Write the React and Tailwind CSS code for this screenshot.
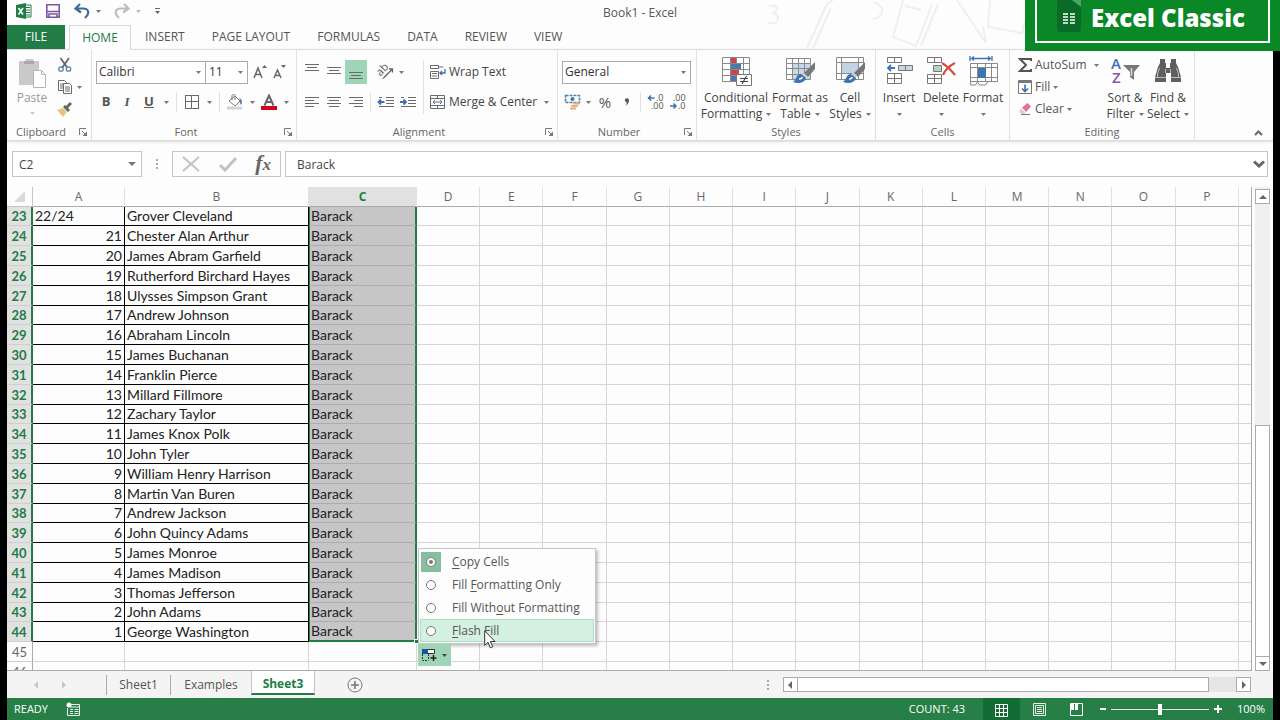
import React, { useState } from 'react';
import clsx from 'clsx';

const presidents = [
  ['22/24', 'Grover Cleveland'],
  ['21', 'Chester Alan Arthur'],
  ['20', 'James Abram Garfield'],
  ['19', 'Rutherford Birchard Hayes'],
  ['18', 'Ulysses Simpson Grant'],
  ['17', 'Andrew Johnson'],
  ['16', 'Abraham Lincoln'],
  ['15', 'James Buchanan'],
  ['14', 'Franklin Pierce'],
  ['13', 'Millard Fillmore'],
  ['12', 'Zachary Taylor'],
  ['11', 'James Knox Polk'],
  ['10', 'John Tyler'],
  ['9', 'William Henry Harrison'],
  ['8', 'Martin Van Buren'],
  ['7', 'Andrew Jackson'],
  ['6', 'John Quincy Adams'],
  ['5', 'James Monroe'],
  ['4', 'James Madison'],
  ['3', 'Thomas Jefferson'],
  ['2', 'John Adams'],
  ['1', 'George Washington'],
];

const emptyColumns = ['D', 'E', 'F', 'G', 'H', 'I', 'J', 'K', 'L', 'M', 'N', 'O', 'P'];

const tabs = ['HOME', 'INSERT', 'PAGE LAYOUT', 'FORMULAS', 'DATA', 'REVIEW', 'VIEW'];

const fillOptions = [
  { id: 'copy', label: <><u>C</u>opy Cells</> },
  { id: 'format', label: <>Fill <u>F</u>ormatting Only</> },
  { id: 'plain', label: <>Fill With<u>o</u>ut Formatting</> },
  { id: 'flash', label: <><u>F</u>lash Fill</> },
];

const Caret = ({ className = 'text-[#777]' }) => (
  <svg viewBox="0 0 5 3" className={clsx('h-[3px] w-[5px] shrink-0', className)} fill="currentColor">
    <path d="M0 0h5L2.5 3z" />
  </svg>
);

const IconButton = ({ label, className = 'w-[22px]', children }) => (
  <button aria-label={label} className={clsx('flex h-6 shrink-0 items-center justify-center', className)}>
    {children}
  </button>
);

const Launcher = ({ label }) => (
  <button aria-label={label} className="absolute right-[3px] bottom-[3px]">
    <svg viewBox="0 0 9 9" className="h-[9px] w-[9px]" fill="none" stroke="#777">
      <path d="M.5 7V.5H7M3 3l3.5 3.5" />
      <path d="M8 3.5V8H3.500z" fill="#777" stroke="none" />
    </svg>
  </button>
);

const Group = ({ name, launcher, className, children }) => (
  <section className={clsx('relative flex shrink-0 flex-col border-r border-[#e1e1e1] pt-1', className)}>
    <div className="flex flex-1">{children}</div>
    <h2 className="text-center text-[11px] leading-4 text-[#666]">{name}</h2>
    {launcher && <Launcher label={`${name} settings`} />}
  </section>
);

const Lines = ({ rows }) => (
  <svg viewBox="0 0 16 16" className="h-4 w-4" stroke="#6a6a6a" shapeRendering="crispEdges">
    {rows.map(([x1, x2, y]) => (
      <path key={y} d={`M${x1} ${y + 0.5}H${x2}`} />
    ))}
  </svg>
);

const IndentIcon = ({ right }) => (
  <svg viewBox="0 0 18 14" className="h-[14px] w-[18px]" fill="none">
    <path d="M2 2.500h3M9 2.500h8M9 5.500h8M9 8.500h8M2 11.500h15" stroke="#6a6a6a" />
    {right ? (
      <path d="M1 7h6M4.500 4.500 7 7l-2.500 2.500" stroke="#3f6fb0" strokeWidth="1.800" />
    ) : (
      <path d="M1.500 7h6M4 4.500 1.500 7 4 9.500" stroke="#3f6fb0" strokeWidth="1.800" />
    )}
  </svg>
);

const DecimalIcon = ({ increase }) => (
  <svg viewBox="0 0 18 16" className="h-4 w-[18px] overflow-visible" fontSize="9" fontFamily="Open Sans, sans-serif" fill="#555">
    <text x={increase ? 9 : 4} y="7">{increase ? '.0' : '.00'}</text>
    <text x={increase ? 4 : 9} y="15">{increase ? '.00' : '.0'}</text>
    {increase ? (
      <path d="M1.500 4h6M4 1.500 1.500 4 4 6.500" fill="none" stroke="#3f6fb0" strokeWidth="1.500" />
    ) : (
      <path d="M1 12h6M4.500 9.500 7 12l-2.500 2.500" fill="none" stroke="#3f6fb0" strokeWidth="1.500" />
    )}
  </svg>
);

const Brush = () => (
  <g>
    <path d="M31 8v7l-7 8-4-4z" fill="#777" />
    <path d="M19 18l4 4-1.500 2-4-4z" fill="#ccc" />
    <path d="M17 20c-5 0-4 5-8 8 5 2 12 1 13-4z" fill="#3f73b3" />
    <path d="M15 25c2 0 3-1 3-2" stroke="#fff" strokeWidth="1.500" />
  </g>
);

const ConditionalIcon = () => (
  <svg viewBox="0 0 32 32" className="h-8 w-8" fill="none">
    <path d="M2.500 3.500h27v24h-27zM2.500 9.500h27M2.500 15.500h27M2.500 21.500h27M10.500 3v25M16.500 3v25M23.500 3v25" stroke="#8a8a8a" />
    <path d="M11 4h5v5h-5zM11 16h8v5h-8z" fill="#cf4446" />
    <path d="M11 10h10v5H11zM11 22h5v5h-5z" fill="#4a78b0" />
    <path d="M16.500 20.500h15v11h-15z" fill="#fff" stroke="#777" />
    <path d="M20 24.500h8M20 27.500h8M26.500 22l-4.500 8" stroke="#444" strokeWidth="1.200" />
  </svg>
);

const FormatTableIcon = () => (
  <svg viewBox="0 0 32 32" className="h-8 w-8" fill="none">
    <path d="M9 10h18v15H9z" fill="#c9d8e8" />
    <path d="M2.500 4.500h24v21h-24zM2.500 9.500h24M2.500 14.500h24M2.500 20.500h24M8.500 4v21M14.500 4v21M20.500 4v21" stroke="#8a8a8a" />
    <Brush />
  </svg>
);

const CellStylesIcon = () => (
  <svg viewBox="0 0 32 32" className="h-8 w-8" fill="none">
    <path d="M2.500 3.500h27v22h-27zM2.500 8.500h27M2.500 19.500h27M7.500 3v22M24.500 3v22" stroke="#8a8a8a" />
    <path d="M8 9h16v10H8z" fill="#c2d3e5" />
    <Brush />
  </svg>
);

const InsertIcon = () => (
  <svg viewBox="0 0 32 32" className="h-8 w-8" fill="none">
    <path d="M4.500 3.500h14v5h-14zM11.500 3v6M4.500 19.500h14v10h-14zM4.500 24.500h14M11.500 19v11" stroke="#777" />
    <path d="M15.500 11.500h14v5h-14z" fill="#c9d8e8" stroke="#777" />
    <path d="M22.500 11v6" stroke="#777" />
    <path d="M5 14h7M8 11l-3 3 3 3" stroke="#3f73b3" strokeWidth="1.800" />
  </svg>
);

const DeleteIcon = () => (
  <svg viewBox="0 0 32 32" className="h-8 w-8" fill="none">
    <path d="M2.500 3.500h14v5h-14zM9.500 3v6M2.500 20.500h14v9h-14zM2.500 24.500h14M9.500 20v10" stroke="#777" />
    <path d="M8.500 11.500h8v6h-8z" fill="#b9d0c4" stroke="#777" />
    <path d="M17 9c5 3 9 7 13 12M30 9c-6 3-10 7-12 12" stroke="#d4503e" strokeWidth="2.200" />
  </svg>
);

const FormatIcon = () => (
  <svg viewBox="0 0 32 32" className="h-8 w-8" fill="none">
    <path d="M3 2v5M25 2v5M5 4.500h18M7 2.500l-2.500 2L7 6.500M21 2.500l2.500 2-2.500 2" stroke="#3f73b3" strokeWidth="1.300" />
    <path d="M3.500 9.500h27v18h-27zM3.500 13.500h27M3.500 23.500h27M10.500 9v19M18.500 9v19M24.500 9v19" stroke="#8a8a8a" />
    <path d="M11 14h8v10h-8z" fill="#3f73b3" />
    <path d="M3.500 27v4h5l2-3 2 3h6l3-4" stroke="#8a8a8a" />
  </svg>
);

const SortIcon = () => (
  <svg viewBox="0 0 32 32" className="h-8 w-8" fontFamily="Open Sans, sans-serif" fontSize="15" fontWeight="600">
    <text x="2" y="15" fill="#3f73b3">A</text>
    <text x="3" y="29" fill="#8455a8">Z</text>
    <path d="M14 11h17l-6 7v8l-4-3v-5z" fill="#787878" />
    <path d="M22.500 14v8" stroke="#ddd" strokeWidth="1.500" />
  </svg>
);

const FindIcon = () => (
  <svg viewBox="0 0 32 32" className="h-8 w-8" fill="#5f5f5f">
    <path d="M8 5h5v4h1v5h4V9h1V5h5v4l2 4 3 10v5H19v-9h-5v9H3v-5l3-10 2-4z" />
    <path d="M5.500 23v-3l2-6M26.500 23v-3l-2-6M13.500 15v4M18.500 15v4M3 23.500h11M19 23.500h10" stroke="#bbb" fill="none" />
  </svg>
);

const LargeButton = ({ icon, first, second, className }) => (
  <button className={clsx('flex shrink-0 flex-col items-center text-[12px] leading-4', className)}>
    <span className="mb-1">{icon}</span>
    <span className="whitespace-nowrap">{first}</span>
    <span className="flex h-4 items-center gap-1 whitespace-nowrap">
      {second}
      <Caret />
    </span>
  </button>
);

const TitleBar = () => (
  <header className="relative flex h-[25px] shrink-0 items-center pb-[3px]">
    <svg viewBox="0 0 264 49" className="absolute top-0 right-[248px] h-[49px] w-[264px]" fill="none" stroke="#efefef" strokeWidth="2">
      <path d="M8 6c10-2 10 6 3 7 9 1 8 12-3 10M46 48 66 4l6-4M52 48 70 8M112 2c12 4 12 14 0 17M225 43 196 0M216 30l9 13-3-16" />
      <path d="M142 0l-10 37 23 9 16-42M160 46 177 4M144 6l16 4M229 0l-2 27 34 6 3-12" />
    </svg>
    <h1 className="absolute inset-x-0 top-[5px] text-center text-[12px] leading-4 text-[#555]">Book1 - Excel</h1>
    <div className="relative flex items-center pl-2">
      <svg viewBox="0 0 18 18" className="mr-3 h-[18px] w-[18px]">
        <path d="M9 3h7v12H9z" fill="#fff" stroke="#217c46" />
        <path d="M11 5.500h4M11 8h4M11 10.500h4M11 13h4" stroke="#217c46" />
        <path d="M1 3l10-2v16L1 15z" fill="#217c46" />
        <path d="M3.500 6l4.500 6.500M8 6l-4.500 6.500" stroke="#fff" strokeWidth="1.600" />
      </svg>
      <IconButton label="Save" className="w-4">
        <svg viewBox="0 0 16 16" className="h-4 w-4" fill="none">
          <path d="M1.800 1.800h12.400v12.400H1.800z" stroke="#7f56a5" strokeWidth="1.600" />
          <path d="M2 8.500h12M4 14V11h8v3" stroke="#7f56a5" strokeWidth="1.600" />
        </svg>
      </IconButton>
      <IconButton label="Undo" className="ml-3 w-[18px]">
        <svg viewBox="0 0 18 16" className="h-4 w-[18px]" fill="none" stroke="#44699c" strokeWidth="2.200">
          <path d="M7 1 2.500 5.500 8 9.500M3 5.500h7c6 0 7 5 2 9.500" />
        </svg>
      </IconButton>
      <span className="ml-[5px]"><Caret /></span>
      <IconButton label="Redo" className="ml-3 w-[18px]">
        <svg viewBox="0 0 18 16" className="h-4 w-[18px]" fill="none" stroke="#bdbdbd" strokeWidth="2.200">
          <path d="M11 1l4.500 4.500L10 9.500M15 5.500H8c-6 0-7 5-2 9.500" />
        </svg>
      </IconButton>
      <span className="ml-[5px]"><Caret className="text-[#bbb]" /></span>
      <IconButton label="Customize toolbar" className="ml-3 w-2">
        <svg viewBox="0 0 7 7" className="h-[7px] w-[7px]" fill="#666">
          <path d="M1 0h5v1H1zM1 3h5L3.500 6z" />
        </svg>
      </IconButton>
    </div>
  </header>
);

const RibbonTabs = () => (
  <nav className="relative flex h-6 shrink-0 gap-px text-[12px] leading-6 text-[#555]">
    <button className="mr-[3px] w-[58px] bg-[#217c46] text-white">FILE</button>
    {tabs.map((tab) => (
      <button
        key={tab}
        className={clsx(
          'relative shrink-0',
          tab === 'HOME'
            ? 'z-10 -mb-px w-[62px] border border-b-0 border-[#d8d8d8] bg-[#fdfdfd] text-[#217c46]'
            : 'px-[13px]'
        )}
      >
        {tab}
      </button>
    ))}
  </nav>
);

const ClipboardGroup = () => (
  <Group name="Clipboard" launcher className="w-[85px] [&_h2]:pr-4">
    <button className="flex w-[50px] flex-col items-center pt-1 text-[12px] leading-4 text-[#999]">
      <svg viewBox="0 0 32 32" className="h-8 w-8 shrink-0">
        <path d="M3 3h6l1-2h7l1 2h5v24H3z" fill="#c9c9c9" />
        <path d="M8 3h10v3H8z" fill="#a9a9a9" />
        <path d="M17.500 12.500h8l4 4v13h-12z" fill="#fff" stroke="#b5b5b5" />
        <path d="M25.500 12.500v4h4" fill="none" stroke="#b5b5b5" />
      </svg>
      Paste
      <span className="mt-[6px]"><Caret className="text-[#ccc]" /></span>
    </button>
    <div className="flex flex-col">
      <div className="flex h-[22px] items-center">
        <IconButton label="Cut" className="w-4">
          <svg viewBox="0 0 16 16" className="h-4 w-4" fill="none">
            <path d="M3.500 1 10.500 11M12 1 5 11" stroke="#666" strokeWidth="1.800" />
            <circle cx="4" cy="12" r="2.200" stroke="#5c80b2" strokeWidth="1.300" />
            <circle cx="11.500" cy="12" r="2.200" stroke="#5c80b2" strokeWidth="1.300" />
          </svg>
        </IconButton>
      </div>
      <div className="flex h-[22px] items-center gap-1">
        <IconButton label="Copy" className="w-4">
          <svg viewBox="0 0 16 16" className="h-4 w-4" fill="#fff" stroke="#6a6a6a">
            <path d="M1.500 1.500h6l2 2v8h-8zM3 5h4M3 7h4M3 9h4" />
            <path d="M6.500 4.500h6l2 2v8h-8zM8 8h5M8 10h5M8 12h5" />
          </svg>
        </IconButton>
        <Caret />
      </div>
      <div className="flex h-[22px] items-center">
        <IconButton label="Format painter" className="w-4">
          <svg viewBox="0 0 16 16" className="h-4 w-4">
            <path d="M0 9l6-2 4 4-4 5z" fill="#e8c47c" />
            <path d="M6 6l5 5 2-2-2-2 4-4-2-2-4 4-1-1z" fill="#666" />
          </svg>
        </IconButton>
      </div>
    </div>
  </Group>
);

const FontGroup = () => (
  <Group name="Font" launcher className="w-[205px] [&_h2]:pr-4">
    <div className="flex flex-col gap-[6px] pt-[6px] pl-1">
      <div className="flex h-6">
        <span className="relative flex items-center">
          <select aria-label="Font family" className="h-[23px] w-[110px] appearance-none border border-[#ababab] bg-white pl-[2px] text-[12px] text-[#333]">
            <option>Calibri</option>
          </select>
          <span className="pointer-events-none absolute right-[5px]"><Caret /></span>
        </span>
        <span className="relative -ml-px flex items-center">
          <select aria-label="Font size" className="h-[23px] w-[43px] appearance-none border border-[#ababab] bg-white pl-[3px] text-[12px] text-[#333]">
            <option>11</option>
          </select>
          <span className="pointer-events-none absolute right-[5px]"><Caret /></span>
        </span>
        <IconButton label="Grow font" className="ml-1">
          <svg viewBox="0 0 16 16" className="h-4 w-4" fill="none" stroke="#666" strokeWidth="1.500">
            <path d="M2 14 6 4l4 10M3.500 10.500h5" />
            <path d="M10 4l2.500-3L15 4z" fill="#666" stroke="none" />
          </svg>
        </IconButton>
        <IconButton label="Shrink font">
          <svg viewBox="0 0 16 16" className="h-4 w-4" fill="none" stroke="#666" strokeWidth="1.500">
            <path d="M3 14 6.500 6l3.500 8M4 11.500h5" />
            <path d="M10 1h5l-2.500 3z" fill="#666" stroke="none" />
          </svg>
        </IconButton>
      </div>
      <div className="flex h-6 items-center text-[13px] text-[#555]">
        <IconButton label="Bold" className="w-[20px]"><b>B</b></IconButton>
        <IconButton label="Italic"><i className="font-['Liberation_Serif'] font-bold">I</i></IconButton>
        <IconButton label="Underline"><b className="underline">U</b></IconButton>
        <IconButton label="Underline style" className="w-3"><Caret /></IconButton>
        <span className="mx-1 h-5 border-l border-[#e1e1e1]" />
        <IconButton label="Borders">
          <svg viewBox="0 0 14 14" className="h-[14px] w-[14px]" fill="none" stroke="#6a6a6a" shapeRendering="crispEdges">
            <path d="M.5.5h13v13H.5zM.5 6.500h13M6.500.5v13" />
          </svg>
        </IconButton>
        <IconButton label="Border style" className="w-3"><Caret /></IconButton>
        <span className="mx-1 h-5 border-l border-[#e1e1e1]" />
        <IconButton label="Fill color">
          <svg viewBox="0 0 18 16" className="h-4 w-[18px]">
            <path d="M3 7l6-5 5 5-5 5z" fill="#fff" stroke="#777" />
            <path d="M6 6V2c0-2 3-2 3 0v4" fill="none" stroke="#777" />
            <path d="M13 4c3 1 4 4 2 7-1-2-2-3-1-5z" fill="#5c80b2" />
            <path d="M1 12.500h15v3H1z" fill="#d3d3d3" />
          </svg>
        </IconButton>
        <IconButton label="Fill colors" className="w-3"><Caret /></IconButton>
        <IconButton label="Font color">
          <svg viewBox="0 0 16 16" className="h-4 w-4">
            <path d="M3.500 11.500 8 1.500l4.500 10M5 8h6" fill="none" stroke="#666" strokeWidth="2" />
            <path d="M0 12h16v4H0z" fill="#d5001c" />
          </svg>
        </IconButton>
        <IconButton label="Font colors" className="w-3"><Caret /></IconButton>
      </div>
    </div>
  </Group>
);

const AlignmentGroup = () => (
  <Group name="Alignment" launcher className="w-[261px] [&_h2]:pr-4">
    <div className="flex flex-col gap-[6px] pt-[6px] pl-1">
      <div className="flex h-6">
        <IconButton label="Top align"><Lines rows={[[1, 15, 0], [3, 13, 3], [1, 15, 6]]} /></IconButton>
        <IconButton label="Middle align"><Lines rows={[[1, 15, 3], [3, 13, 6], [1, 15, 9]]} /></IconButton>
        <IconButton label="Bottom align" className="w-[22px] bg-[#9fd5b7]"><Lines rows={[[1, 15, 8], [3, 13, 11], [1, 15, 14]]} /></IconButton>
        <IconButton label="Orientation" className="ml-2 w-[22px]">
          <svg viewBox="0 0 16 16" className="h-4 w-4 overflow-visible" fill="none" stroke="#666">
            <text x="-1" y="9" transform="rotate(-45 5 7)" fontSize="11" fontFamily="Open Sans, sans-serif" fill="#555" stroke="none">ab</text>
            <path d="M5 14.500 14.500 5M11 5h3.500v3.500" strokeWidth="1.300" />
          </svg>
        </IconButton>
        <IconButton label="Orientation options" className="w-2"><Caret /></IconButton>
      </div>
      <div className="flex h-6 items-center">
        <IconButton label="Align left"><Lines rows={[[1, 15, 3], [1, 10, 6], [1, 15, 9], [1, 10, 12]]} /></IconButton>
        <IconButton label="Center"><Lines rows={[[1, 15, 3], [3, 13, 6], [1, 15, 9], [3, 13, 12]]} /></IconButton>
        <IconButton label="Align right"><Lines rows={[[1, 15, 3], [6, 15, 6], [1, 15, 9], [6, 15, 12]]} /></IconButton>
        <span className="mr-1 ml-[3px] h-5 border-l border-[#e1e1e1]" />
        <IconButton label="Decrease indent"><IndentIcon /></IconButton>
        <IconButton label="Increase indent"><IndentIcon right /></IconButton>
      </div>
    </div>
    <div className="mt-[6px] ml-1 flex h-[54px] flex-col gap-[6px] border-l border-[#e1e1e1] pl-[6px] text-[12px] text-[#444]">
      <button className="flex h-6 items-center gap-[3px]">
        <svg viewBox="0 0 16 16" className="h-4 w-4" fill="none" stroke="#6a6a6a">
          <path d="M.5 1.500h8v3h-8zM8.500 3h5M.5 7.500h8v7h-8zM2 9.500h5M2 12h5" />
          <path d="M15 5v4h-5M12 7l-2 2 2 2" stroke="#3f6fb0" strokeWidth="1.300" />
        </svg>
        Wrap Text
      </button>
      <button className="flex h-6 items-center gap-[3px] whitespace-nowrap">
        <svg viewBox="0 0 16 16" className="h-4 w-4" fill="none" stroke="#6a6a6a">
          <path d="M.5 1.500h14v13H.5zM.5 4.500h14M.5 11.500h14M7.500 1.500v3M7.500 11.500v3" />
          <path d="M3 8h9M5 6 3 8l2 2M10 6l2 2-2 2" stroke="#55789f" />
        </svg>
        Merge &amp; Center
        <span className="ml-1"><Caret /></span>
      </button>
    </div>
  </Group>
);

const NumberGroup = () => (
  <Group name="Number" launcher className="w-[139px] [&_h2]:pr-4">
    <div className="flex flex-col gap-[6px] pt-[6px] pl-1">
      <span className="relative flex h-6 items-center">
        <select aria-label="Number format" className="h-[23px] w-[129px] appearance-none border border-[#ababab] bg-white pl-[2px] text-[12px] text-[#333]">
          <option>General</option>
        </select>
        <span className="pointer-events-none absolute right-[5px]"><Caret /></span>
      </span>
      <div className="flex h-6 items-center text-[#555]">
        <IconButton label="Accounting format">
          <svg viewBox="0 0 18 16" className="h-4 w-[18px]" fill="none">
            <path d="M1.500 1.500h14v7h-14z" stroke="#4f7fae" strokeWidth="1.600" strokeDasharray="3 1" />
            <circle cx="8.500" cy="5" r="2" fill="#3f6fb0" />
            <path d="M9 9.500h7M7 12h7M6 14.500h6" stroke="#e7b07c" strokeWidth="1.800" />
          </svg>
        </IconButton>
        <IconButton label="Accounting options" className="w-2"><Caret /></IconButton>
        <IconButton label="Percent style" className="w-[26px] text-[15px]">%</IconButton>
        <IconButton label="Comma style" className="w-[18px]">
          <svg viewBox="0 0 6 8" className="h-2 w-[6px]" fill="#555">
            <path d="M1 1.500C2-.5 5 0 5 2.500 5 5 3 7 1.500 8c1-1.500 1.500-3 1-4C1.500 4 .5 3 1 1.500z" />
          </svg>
        </IconButton>
        <span className="mx-1 h-5 border-l border-[#e1e1e1]" />
        <IconButton label="Increase decimal"><DecimalIcon increase /></IconButton>
        <IconButton label="Decrease decimal"><DecimalIcon /></IconButton>
      </div>
    </div>
  </Group>
);

const EditingGroup = () => (
  <Group name="Editing" className="w-[185px]">
    <div className="flex w-[92px] shrink-0 flex-col pl-2 text-[12px] text-[#555]">
      <button className="flex h-[22px] items-center gap-[3px]">
        <svg viewBox="0 0 14 14" className="h-[14px] w-[14px] shrink-0" fill="none" stroke="#555" strokeWidth="2">
          <path d="M13 3V1H2l6 6-6 6h11v-2" />
        </svg>
        AutoSum
        <span className="ml-1"><Caret /></span>
      </button>
      <button className="flex h-[22px] items-center gap-[3px]">
        <svg viewBox="0 0 14 14" className="h-[14px] w-[14px] shrink-0" fill="none">
          <path d="M.5.5h13v13H.5z" stroke="#777" />
          <path d="M1 1h12v2H1z" fill="#777" />
          <path d="M7 4.500v7M4 8.500l3 3 3-3" stroke="#3f6fb0" strokeWidth="1.600" />
        </svg>
        Fill
        <Caret />
      </button>
      <button className="flex h-[22px] items-center gap-[3px]">
        <svg viewBox="0 0 14 14" className="h-[14px] w-[14px] shrink-0">
          <path d="M4 5.500 9.500 1 13 4.500 8 10z" fill="#dd7590" />
          <path d="M3 6.500 7.500 11 5 12.500 1 10z" fill="#eec0cb" />
          <path d="M3 12.500h9" stroke="#777" />
        </svg>
        Clear
        <Caret />
      </button>
    </div>
    <LargeButton className="w-[46px]" icon={<SortIcon />} first="Sort &amp;" second="Filter" />
    <LargeButton className="w-[40px]" icon={<FindIcon />} first="Find &amp;" second="Select" />
  </Group>
);

const Ribbon = () => (
  <div className="relative flex h-[92px] shrink-0 border-t border-b border-[#dcdcdc] text-[#444] shadow-sm">
    <ClipboardGroup />
    <FontGroup />
    <AlignmentGroup />
    <NumberGroup />
    <Group name="Styles" className="w-[179px]">
      <LargeButton className="w-[78px]" icon={<ConditionalIcon />} first="Conditional" second="Formatting" />
      <LargeButton className="w-[50px]" icon={<FormatTableIcon />} first="Format as" second="Table" />
      <LargeButton className="w-[50px]" icon={<CellStylesIcon />} first="Cell" second="Styles" />
    </Group>
    <Group name="Cells" className="w-[134px]">
      <LargeButton className="ml-[2px] w-[42px]" icon={<InsertIcon />} first="Insert" />
      <LargeButton className="w-[42px]" icon={<DeleteIcon />} first="Delete" />
      <LargeButton className="w-[42px]" icon={<FormatIcon />} first="Format" />
    </Group>
    <EditingGroup />
    <button aria-label="Collapse ribbon" className="mt-auto mr-[10px] mb-1 ml-auto">
      <svg viewBox="0 0 9 6" className="h-[6px] w-[9px]" fill="none" stroke="#666" strokeWidth="2">
        <path d="M1 5l3.500-3.500L8 5" />
      </svg>
    </button>
  </div>
);

const Dots = () => (
  <svg viewBox="0 0 2 10" className="h-[10px] w-[2px] shrink-0" fill="#aaa">
    <path d="M0 0h2v2H0zM0 4h2v2H0zM0 8h2v2H0z" />
  </svg>
);

const FormulaBar = () => (
  <div className="flex h-[46px] shrink-0 items-center px-[5px] text-[12px] text-[#444]">
    <span className="relative flex items-center">
      <input aria-label="Name box" defaultValue="C2" className="h-[26px] w-[130px] border border-[#c6c6c6] bg-white px-[6px]" />
      <svg viewBox="0 0 8 4" className="absolute right-[6px] h-1 w-2" fill="#777">
        <path d="M0 0h8L4 4z" />
      </svg>
    </span>
    <span className="mx-[14px]"><Dots /></span>
    <div className="mr-1 flex h-[26px] w-[109px] items-center justify-between border border-[#c6c6c6] px-[9px]">
      <button aria-label="Cancel">
        <svg viewBox="0 0 18 16" className="h-4 w-[18px]" fill="none" stroke="#c2c2c2" strokeWidth="2">
          <path d="M1 1l16 14M17 1 1 15" />
        </svg>
      </button>
      <button aria-label="Enter">
        <svg viewBox="0 0 18 16" className="h-4 w-[18px]" fill="none" stroke="#c2c2c2" strokeWidth="3">
          <path d="M1 9l5 5L17 2" />
        </svg>
      </button>
      <button aria-label="Insert function" className="font-['Liberation_Serif'] text-[22px] leading-5 font-bold text-[#666] italic">
        f<span className="text-[17px]">x</span>
      </button>
    </div>
    <span className="relative flex flex-1 items-center">
      <input aria-label="Formula" defaultValue="Barack" className="h-[26px] w-full border border-[#c6c6c6] bg-white px-[11px]" />
      <svg viewBox="0 0 12 8" className="absolute right-[3px] h-2 w-3" fill="none" stroke="#666" strokeWidth="3">
        <path d="M1 1.500l5 4.500 5-4.500" />
      </svg>
    </span>
  </div>
);

const emptyCell = 'border-r border-b border-[#d6d6d6]';

const SheetRow = ({ number, data }) => (
  // the average row is a fifth of a pixel short of 20
  <tr className={number % 5 === 3 ? 'h-[19px]' : 'h-5'}>
    <th
      scope="row"
      className={clsx(
        'overflow-hidden border-b border-[#cfcfcf] text-center text-[13px]',
        data
          ? 'border-r-2 border-r-[#217c46] bg-[#e1e1e1] font-bold text-[#217c46]'
          : 'border-r border-r-[#ababab] font-normal text-[#666]'
      )}
    >
      {number}
    </th>
    {data ? (
      <>
        <td className={clsx('border-r border-b border-black px-[2px]', data[0].includes('/') ? 'text-left' : 'text-right')}>
          {data[0]}
        </td>
        <td className="border-r border-b border-black pl-[2px]">{data[1]}</td>
        <td
          className={clsx(
            'relative border-r-2 border-b border-l border-[#217c46] bg-[#c6c6c6] pl-px',
            number === 44 ? 'border-b-2' : 'border-b-[#adadad]'
          )}
        >
          Barack
          {number === 44 && <span className="absolute -right-1 -bottom-1 h-[5px] w-[5px] border border-white bg-[#217c46]" />}
        </td>
      </>
    ) : (
      <>
        <td className={emptyCell} />
        <td className={emptyCell} />
        <td className={emptyCell} />
      </>
    )}
    {emptyColumns.map((column) => (
      <td key={column} className={emptyCell} />
    ))}
    <td className="border-b border-[#d6d6d6]" />
  </tr>
);

const FillMenu = () => {
  const [selected, setSelected] = useState('copy');

  return (
    <div className="absolute top-[361px] left-[411px]">
      <fieldset className="w-[178px] border border-[#c6c6c6] bg-[#fdfdfd] p-px text-[12px] text-[#555] shadow-[2px_2px_3px_rgba(0,0,0,0.25)]">
        {fillOptions.map(({ id, label }) => (
          <label
            key={id}
            className={clsx(
              'flex h-[23px] items-center border',
              id === 'flash' ? 'border-[#b0ddc5] bg-[#d3f0e0]' : 'border-transparent'
            )}
          >
            <span className={clsx('mr-[11px] flex h-5 w-5 items-center justify-center', selected === id && 'bg-[#86bf9f]')}>
              <input
                type="radio"
                name="fill"
                checked={selected === id}
                onChange={() => setSelected(id)}
                className="h-[10px] w-[10px] appearance-none rounded-full border border-[#777] bg-white checked:h-2 checked:w-2 checked:border-2 checked:border-white checked:bg-[#777] checked:outline checked:outline-[#888]"
              />
            </span>
            <span className="underline-offset-2">{label}</span>
          </label>
        ))}
      </fieldset>
      <button aria-label="Auto fill options" className="flex h-[22px] w-[33px] items-center justify-between bg-[#9fd5b7] px-1">
        <svg viewBox="0 0 16 16" className="h-4 w-4" fill="none">
          <path d="M.5 2.500h12v4H.5z" fill="#fff" stroke="#333" />
          <path d="M0 2h6v5H0z" fill="#23509a" />
          <path d="M.5 7v6.500h6M6.500 7v6" stroke="#333" strokeDasharray="2 1" />
          <path d="M11.500 8v6M8.500 11h6" stroke="#222" strokeWidth="1.500" />
        </svg>
        <Caret className="text-[#444]" />
      </button>
      <svg viewBox="0 0 12 19" className="absolute top-[82px] left-[66px] h-[19px] w-3">
        <path d="M.7.8v14.500l3.300-3 2.300 5.500 2.400-1-2.300-5.300h4.600z" fill="#fff" stroke="#333" />
      </svg>
    </div>
  );
};

const ScrollButton = ({ label, path, className }) => (
  <button aria-label={label} className={clsx('flex h-[15px] w-[15px] shrink-0 items-center justify-center border border-[#ababab] bg-white', className)}>
    <svg viewBox="0 0 8 8" className="h-2 w-2" fill="#666">
      <path d={path} />
    </svg>
  </button>
);

const Sheet = () => (
  <main className="relative flex min-h-0 flex-1">
    <div className="min-w-0 flex-1 self-stretch overflow-hidden border-r border-b border-[#ababab]">
      <table className="w-full table-fixed border-separate border-spacing-0 font-['Lato',sans-serif] text-[14px] leading-[18px] whitespace-nowrap text-[#222]">
        <colgroup>
          <col className="w-[26px]" />
          <col className="w-[92px]" />
          <col className="w-[184px]" />
          <col className="w-[108px]" />
          {emptyColumns.map((column) => <col key={column} />)}
          <col className="w-3" />
        </colgroup>
        <thead>
          <tr className="h-5 font-['Open_Sans',sans-serif] text-[12px] text-[#666]">
            <th className="border-r border-b border-[#c6c6c6]">
              <svg viewBox="0 0 11 11" className="mx-auto h-[11px] w-[11px]" fill="#dadada">
                <path d="M11 0v11H0z" />
              </svg>
            </th>
            {['A', 'B', 'C', ...emptyColumns].map((column) => (
              <th
                key={column}
                scope="col"
                className={clsx(
                  'border-r border-b border-[#ababab] border-r-[#e1e1e1]',
                  column === 'C' ? 'bg-[#e1e1e1] text-[#217c46]' : 'font-normal'
                )}
              >
                {column}
              </th>
            ))}
            <th className="border-b border-[#ababab]" />
          </tr>
        </thead>
        <tbody>
          {presidents.map((row, i) => (
            <SheetRow key={row[1]} number={23 + i} data={row} />
          ))}
          <SheetRow number={45} />
          <SheetRow number={46} />
        </tbody>
      </table>
    </div>
    <div className="mr-[3px] ml-[3px] flex w-[15px] flex-col bg-[#f0f0f0] pt-[2px]">
      <ScrollButton label="Scroll up" path="M0 6h8L4 2z" />
      <span className="flex-1" />
      <span className="h-[232px] border border-[#ababab] bg-white" />
      <ScrollButton label="Scroll down" path="M0 2h8L4 6z" className="-mt-px" />
    </div>
    <FillMenu />
  </main>
);

const SheetTabs = () => (
  <div className="flex h-[27px] shrink-0 items-center bg-[#f4f4f4] text-[12px] text-[#555]">
    <div className="flex w-[99px] items-center gap-5 pl-[25px]">
      {['M6 0v8L2 4z', 'M2 0v8l4-4z'].map((path) => (
        <svg key={path} viewBox="0 0 8 8" className="h-2 w-2" fill="#c6c6c6">
          <path d={path} />
        </svg>
      ))}
    </div>
    <button className="h-5 w-[64px] border-l border-[#ababab]">Sheet1</button>
    <button className="h-5 w-[81px] border-l border-[#ababab]">Examples</button>
    <button className="h-6 w-[64px] self-start border-x border-b-2 border-x-[#c6c6c6] border-b-[#217c46] bg-white pt-[3px] font-bold text-[#217c46]">
      Sheet3
    </button>
    <button aria-label="New sheet" className="ml-8">
      <svg viewBox="0 0 16 16" className="h-4 w-4" fill="none" stroke="#777">
        <circle cx="8" cy="8" r="7" />
        <path d="M4 8h8M8 4v8" strokeWidth="1.600" />
      </svg>
    </button>
    <span className="mr-[14px] ml-auto"><Dots /></span>
    <div className="mr-[22px] flex w-[37%] bg-[#e6e6e6]">
      <ScrollButton label="Scroll left" path="M6 0v8L2 4z" />
      <span className="-ml-px w-[412px] border border-[#ababab] bg-white" />
      <ScrollButton label="Scroll right" path="M2 0v8l4-4z" className="ml-auto" />
    </div>
  </div>
);

const StatusBar = () => (
  <footer className="flex h-[22px] shrink-0 items-center bg-[#277f47] text-[11px] text-white">
    <span className="pl-[7px]">READY</span>
    <svg viewBox="0 0 14 14" className="ml-[18px] h-[14px] w-[14px]" fill="none" stroke="#e5f3ea">
      <path d="M4 2.500h9.500v11h-12V6M4 5h9M4 7.500h3M8.500 7.500h4M4 9.500h3M8.500 9.500h4M4 11.500h3M8.500 11.500h4" />
      <circle cx="3" cy="3" r="2.500" fill="#fff" stroke="none" />
    </svg>
    <span className="mr-[18px] ml-auto">COUNT: 43</span>
    <IconButton label="Normal view" className="w-[37px] self-stretch bg-[#136b35]">
      <svg viewBox="0 0 13 13" className="h-[13px] w-[13px]" fill="none" stroke="#fff">
        <path d="M.5.5h12v12H.5zM.5 4.500h12M.5 8.500h12M4.500.5v12M8.500.5v12" />
      </svg>
    </IconButton>
    <IconButton label="Page layout view" className="w-[38px]">
      <svg viewBox="0 0 13 13" className="h-[13px] w-[13px]" fill="none" stroke="#e5f3ea">
        <path d="M.5.5h12v12H.5zM2.500 2.500h8v8h-8zM4 4.500h5M4 6.500h5M4 8.500h5" />
      </svg>
    </IconButton>
    <IconButton label="Page break view" className="w-[37px]">
      <svg viewBox="0 0 13 13" className="h-[13px] w-[13px]" fill="none" stroke="#fff">
        <path d="M.5.5h12v12H.5z" />
        <path d="M1 1h3v6H1zM5 1h3v6H5z" fill="#fff" stroke="none" />
      </svg>
    </IconButton>
    <button aria-label="Zoom out" className="ml-[5px] h-[2px] w-[6px] bg-white" />
    <input
      type="range"
      aria-label="Zoom"
      defaultValue="50"
      className="mx-[5px] h-3 w-[98px] appearance-none bg-[linear-gradient(#e5f3ea,#e5f3ea)] bg-[length:100%_1px] bg-center bg-no-repeat [&::-webkit-slider-thumb]:h-[11px] [&::-webkit-slider-thumb]:w-1 [&::-webkit-slider-thumb]:appearance-none [&::-webkit-slider-thumb]:bg-white"
    />
    <button aria-label="Zoom in">
      <svg viewBox="0 0 8 8" className="h-2 w-2" stroke="#fff" strokeWidth="2">
        <path d="M0 4h8M4 0v8" />
      </svg>
    </button>
    <span className="mr-2 ml-[15px]">100%</span>
  </footer>
);

const Banner = () => (
  <div className="absolute top-0 right-0 z-20 bg-[#0a8726] px-[10px] pb-2">
    <div className="flex h-[43px] w-[235px] items-start border-2 border-t-0 border-white pl-5">
      <svg viewBox="0 0 24 32" className="mr-[10px] h-8 w-6 shrink-0">
        <path d="M0 0h15l9 7v23l-2 2H2l-2-2z" fill="#0a6b29" />
        <path d="M15 0h9v7z" fill="#4ba561" />
        <path d="M6 14h5M13 14h5M6 17h5M13 17h5M6 20h5M13 20h5M6 23h5M13 23h5" stroke="#fff" strokeWidth="1.600" />
      </svg>
      <strong className="text-[24px] leading-9 font-extrabold whitespace-nowrap text-white">Excel Classic</strong>
    </div>
  </div>
);

const App = () => (
  <div className="relative h-screen bg-black px-[7px] font-['Open_Sans',sans-serif]">
    <div className="flex h-full flex-col bg-[#fdfdfd]">
      <TitleBar />
      <RibbonTabs />
      <Ribbon />
      <FormulaBar />
      <Sheet />
      <SheetTabs />
      <StatusBar />
    </div>
    <Banner />
  </div>
);

export default App;
